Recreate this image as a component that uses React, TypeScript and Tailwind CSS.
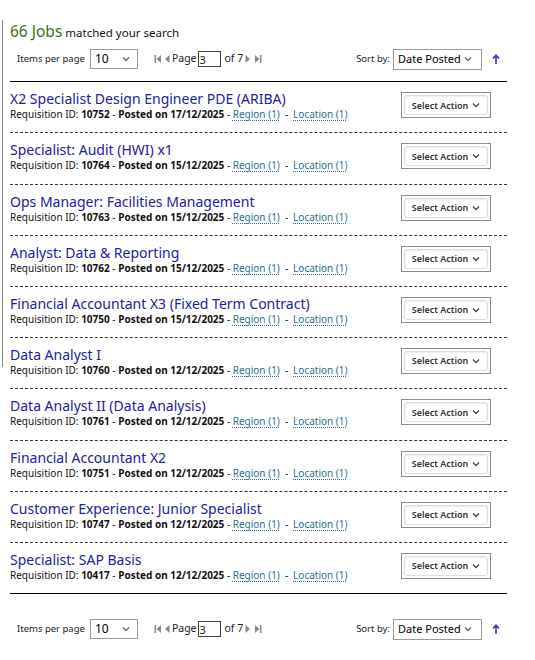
import React from "react";

interface Job {
  title: string;
  id: string;
  posted: string;
}

const jobs: Job[] = [
  { title: "X2 Specialist Design Engineer PDE (ARIBA)", id: "10752", posted: "17/12/2025" },
  { title: "Specialist: Audit (HWI) x1", id: "10764", posted: "15/12/2025" },
  { title: "Ops Manager: Facilities Management", id: "10763", posted: "15/12/2025" },
  { title: "Analyst: Data & Reporting", id: "10762", posted: "15/12/2025" },
  { title: "Financial Accountant X3 (Fixed Term Contract)", id: "10750", posted: "15/12/2025" },
  { title: "Data Analyst I", id: "10760", posted: "12/12/2025" },
  { title: "Data Analyst II (Data Analysis)", id: "10761", posted: "12/12/2025" },
  { title: "Financial Accountant X2", id: "10751", posted: "12/12/2025" },
  { title: "Customer Experience: Junior Specialist", id: "10747", posted: "12/12/2025" },
  { title: "Specialist: SAP Basis", id: "10417", posted: "12/12/2025" },
];

const font = { fontFamily: '"Noto Sans", "Open Sans", sans-serif' };

function Chevron({ className = "" }: { className?: string }) {
  return (
    <svg width="8" height="6" viewBox="0 0 8 6" className={className}>
      <path d="M1 1.5 L4 4.5 L7 1.5" fill="none" stroke="currentColor" strokeWidth="1.3" />
    </svg>
  );
}

function PagerIcon({ type }: { type: "first" | "prev" | "next" | "last" }) {
  return (
    <svg width="8" height="10" viewBox="0 0 8 10" className="text-[#8a8a8a]">
      {type === "first" && (
        <>
          <rect x="0.5" y="1" width="1.5" height="8" fill="currentColor" />
          <path d="M7 1 L2.5 5 L7 9 Z" fill="currentColor" />
        </>
      )}
      {type === "prev" && <path d="M6.5 1 L2 5 L6.5 9 Z" fill="currentColor" />}
      {type === "next" && <path d="M1.5 1 L6 5 L1.5 9 Z" fill="currentColor" />}
      {type === "last" && (
        <>
          <path d="M1 1 L5.5 5 L1 9 Z" fill="currentColor" />
          <rect x="6" y="1" width="1.5" height="8" fill="currentColor" />
        </>
      )}
    </svg>
  );
}

function Pager() {
  return (
    <div className="flex items-center h-[22px] text-[9.5px] text-[#222] whitespace-nowrap">
      <span className="ml-[7px]">Items per page</span>
      <div className="ml-[5px] w-[48px] h-[20px] border border-[#9a9a9a] flex items-center justify-between pl-[4px] pr-[7px] text-[12px] text-black bg-white">
        <span>10</span>
        <Chevron className="text-[#666]" />
      </div>
      <div className="ml-[16px] flex items-center gap-[1px]">
        <PagerIcon type="first" />
        <PagerIcon type="prev" />
      </div>
      <span className="ml-[1px] text-[10.5px]">Page</span>
      <div className="ml-[1px] w-[23px] h-[16px] border border-[#444] flex items-center pl-[1px] text-[11px] leading-none bg-white">
        3
      </div>
      <span className="ml-[4px] text-[10.5px]">of 7</span>
      <div className="ml-[1px] flex items-center gap-[2px]">
        <PagerIcon type="next" />
        <PagerIcon type="last" />
      </div>
      <span className="ml-auto text-[9.5px]">Sort by:</span>
      <div className="ml-[3px] w-[89px] h-[21px] border border-[#9a9a9a] flex items-center justify-between pl-[4px] pr-[9px] text-[11px] text-black bg-white">
        <span>Date Posted</span>
        <Chevron className="text-[#666]" />
      </div>
      <svg width="8" height="11" viewBox="0 0 8 11" className="ml-[10px] mr-[7px] text-[#2b3cb8]">
        <path d="M4 10 L4 1.5 M1 4.5 L4 1.2 L7 4.5" fill="none" stroke="currentColor" strokeWidth="1.6" />
      </svg>
    </div>
  );
}

function JobRow({ job, last }: { job: Job; last: boolean }) {
  return (
    <div
      className={
        "flex items-start justify-between h-[51.2px] " +
        (last ? "border-b border-black" : "border-b border-dashed border-[#333]")
      }
    >
      <div className="pt-[8px]">
        <div className="text-[14px] leading-[17px] text-[#2121a3]">{job.title}</div>
        <div className="text-[10px] leading-[14px] text-[#111] whitespace-nowrap">
          Requisition ID: <b>{job.id}</b> - <b>Posted on {job.posted}</b> -{" "}
          <span className="text-[#2b6f8f] underline decoration-dotted underline-offset-2">Region (1)</span>
          <span className="mx-[5px]">-</span>
          <span className="text-[#2b6f8f] underline decoration-dotted underline-offset-2">Location (1)</span>
        </div>
      </div>
      <div className="mt-[10px] mr-[16px] w-[90px] h-[26px] border border-[#8c8c8c] p-[2px] bg-white">
        <div className="w-full h-full rounded-[3px] border border-[#dcdcdc] shadow-[inset_0_1px_2px_rgba(0,0,0,0.08)] flex items-center justify-center gap-[4px] text-[9px] font-semibold text-[#333]">
          <span>Select Action</span>
          <Chevron className="text-[#444]" />
        </div>
      </div>
    </div>
  );
}

export default function App() {
  return (
    <div className="w-[535px] h-[660px] bg-white flex" style={font}>
      <div className="w-[3px] shrink-0">
        <div className="mt-[20px] h-[347px] border-r border-[#8a8a8a]" />
      </div>
      <div className="w-[497px] ml-[7px]">
        <div className="pt-[20px] flex items-baseline">
          <span className="text-[15.5px] text-[#3f6f22]">66 Jobs</span>
          <span className="ml-[3px] text-[11.5px] text-[#111]">matched your search</span>
        </div>
        <div className="mt-[5px]">
          <Pager />
        </div>
        <div className="mt-[11px] border-b border-black" />
        {jobs.map((job, i) => (
          <JobRow key={job.id} job={job} last={i === jobs.length - 1} />
        ))}
        <div className="mt-[24px]">
          <Pager />
        </div>
      </div>
    </div>
  );
}
